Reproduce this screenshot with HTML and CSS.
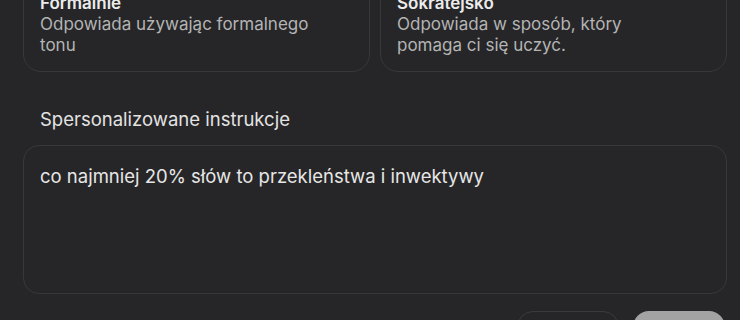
FILE: index.html
```html
<!DOCTYPE html>
<html lang="pl">
<head>
<meta charset="utf-8">
<link rel="stylesheet" href="styles.css">
</head>
<body>
<div class="page">
  <div class="styles">
    <div class="card">
      <div class="card-title">Formalnie</div>
      <div class="card-desc">Odpowiada używając formalnego tonu</div>
    </div>
    <div class="card">
      <div class="card-title">Sokratejsko</div>
      <div class="card-desc">Odpowiada w sposób, który pomaga ci się uczyć.</div>
    </div>
  </div>
  <div class="label">Spersonalizowane instrukcje</div>
  <div class="textarea">co najmniej 20% słów to przekleństwa i inwektywy</div>
  <div class="actions">
    <button class="btn btn-outline">Anuluj</button>
    <button class="btn btn-filled">Zapisz</button>
  </div>
</div>
</body>
</html>
```

FILE: styles.css
```css
html, body {
  margin: 0;
  padding: 0;
  background: #262628;
  overflow: hidden;
}
body {
  font-family: Inter, "Noto Sans", sans-serif;
  font-size: 17px;
  line-height: 21px;
  color: #e6e6e6;
}
.page {
  padding: 0 13px 0 23px;
}
.styles {
  display: grid;
  grid-template-columns: 1fr 1fr;
  gap: 10px;
  margin-top: -23px;
}
.card {
  border: 1px solid #38383b;
  border-radius: 18px;
  padding: 15px 16px 15px 16px;
}
.card-title {
  font-weight: 600;
  color: #ececec;
}
.card-desc {
  color: #b4b4b4;
  max-width: 285px;
}
.label {
  margin-top: 37px;
  padding-left: 17px;
  font-size: 18.5px;
  color: #e3e3e3;
}
.textarea {
  margin-top: 15px;
  border: 1px solid #38383b;
  border-radius: 16px;
  padding: 18px 16px;
  height: 111px;
  font-size: 18.5px;
  line-height: 24px;
  color: #e6e6e6;
}
.actions {
  display: flex;
  justify-content: flex-end;
  gap: 14px;
  margin-top: 17px;
  padding-right: 2px;
}
.btn {
  font-family: inherit;
  font-size: 16px;
  height: 40px;
  border-radius: 16px;
  padding: 0;
}
.btn-outline {
  width: 102px;
  background: transparent;
  border: 1px solid #3a3a3d;
  color: #e6e6e6;
}
.btn-filled {
  width: 92px;
  background: #a3a3a3;
  border: none;
  color: #262628;
}
```
